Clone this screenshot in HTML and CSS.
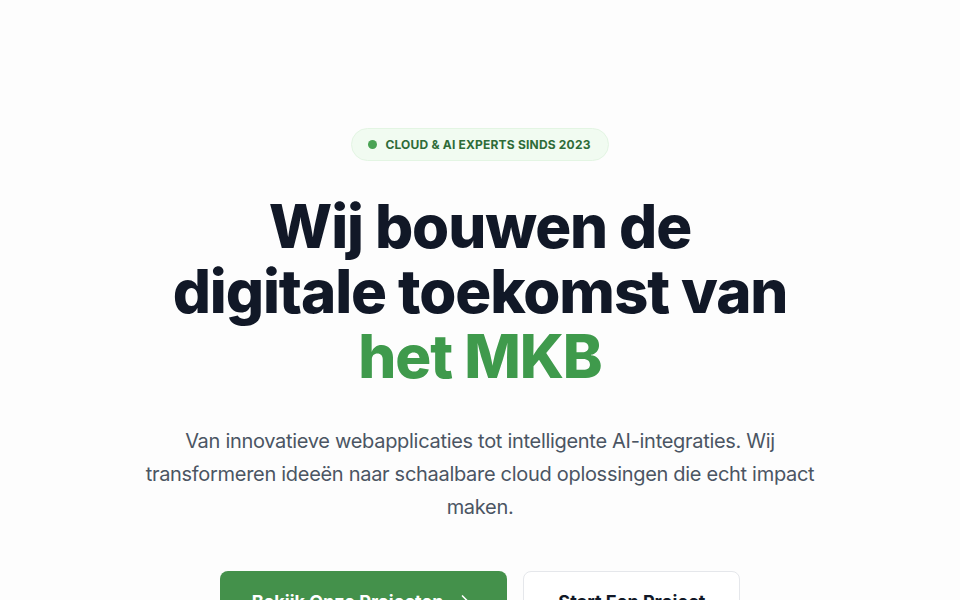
FILE: index.html
```html
<!DOCTYPE html>
<html lang="nl">
<head>
<meta charset="utf-8">
<title>Hero</title>
<link rel="stylesheet" href="styles.css">
</head>
<body>
<section class="hero">
  <div class="badge"><span class="dot"></span>CLOUD &amp; AI EXPERTS SINDS 2023</div>
  <h1 class="title">Wij bouwen de<br>digitale toekomst van<br><span class="accent">het MKB</span></h1>
  <p class="lead">Van innovatieve webapplicaties tot intelligente AI-integraties. Wij transformeren ideeën naar schaalbare cloud oplossingen die echt impact maken.</p>
  <div class="actions">
    <a class="btn btn-primary" href="#">Bekijk Onze Projecten
      <svg class="chev" width="20" height="20" viewBox="0 0 24 24" fill="none" stroke="currentColor" stroke-width="2" stroke-linecap="round" stroke-linejoin="round"><path d="M9 6l6 6-6 6"/></svg>
    </a>
    <a class="btn btn-secondary" href="#">Start Een Project</a>
  </div>
</section>
</body>
</html>
```
FILE: styles.css
```css
html, body {
  margin: 0;
  padding: 0;
  background: #fdfdfd;
}
body {
  font-family: Inter, "Liberation Sans", sans-serif;
  color: #111827;
}
.hero {
  display: flex;
  flex-direction: column;
  align-items: center;
  padding-top: 128px;
  text-align: center;
}
.badge {
  display: inline-flex;
  align-items: center;
  gap: 8px;
  height: 33px;
  box-sizing: border-box;
  padding: 0 17px 0 16px;
  border-radius: 999px;
  background: #f1fbf1;
  border: 1px solid #e3f5e3;
  color: #2e6b38;
  font-size: 12px;
  font-weight: 700;
  letter-spacing: 0.2px;
}
.dot {
  width: 9px;
  height: 9px;
  border-radius: 50%;
  background: #4aa354;
}
.title {
  margin: 33px 0 0;
  font-size: 60px;
  line-height: 65px;
  font-weight: 800;
  letter-spacing: -1.1px;
  color: #111827;
}
.accent {
  color: #3f9a4c;
}
.lead {
  margin: 36px 0 0;
  max-width: 680px;
  font-size: 20px;
  line-height: 33px;
  letter-spacing: -0.3px;
  color: #4b5563;
}
.actions {
  display: flex;
  gap: 16px;
  margin-top: 47px;
}
.btn {
  display: inline-flex;
  align-items: center;
  gap: 12px;
  height: 60px;
  box-sizing: border-box;
  padding: 0 32px;
  border-radius: 8px;
  font-size: 18px;
  font-weight: 700;
  text-decoration: none;
}
.btn-primary {
  background: #44914b;
  color: #ffffff;
}
.btn-secondary {
  background: #ffffff;
  color: #111827;
  border: 1px solid #e5e7eb;
  padding: 0 34px;
}
.chev {
  display: block;
}
```
